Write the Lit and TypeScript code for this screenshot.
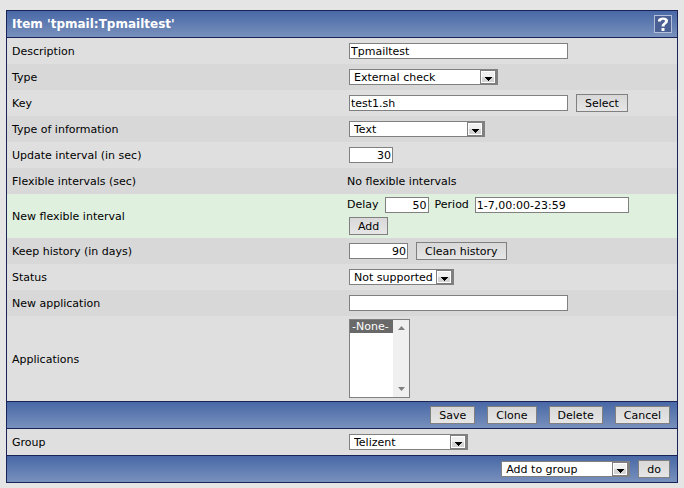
import { LitElement, html, css } from "lit";
import { customElement } from "lit/decorators.js";

const arrow = html`<svg class="arrow" width="17" height="14" viewBox="0 0 17 14" aria-hidden="true">
  <rect width="17" height="14" fill="#808080" />
  <rect x="1" y="1" width="14" height="12" fill="#fff" />
  <rect x="2" y="2" width="12" height="5" fill="#f0f0f0" />
  <rect x="2" y="7" width="12" height="5" fill="#d4d4d4" />
  <path d="M5 7h7v1h-1v1h-1v1h-1v1h-1v-1h-1v-1h-1v-1h-1z" fill="#000" />
</svg>`;

@customElement("form-row")
export class FormRow extends LitElement {
  static styles = css`
    :host {
      display: grid;
      grid-template-columns: 1fr 1fr;
      align-items: center;
      min-height: 26px;
    }
    .label {
      padding: 2px 5px 0;
    }
    .value {
      padding: 3px 5px;
      display: flex;
      flex-direction: column;
      gap: 4px;
      align-items: flex-start;
    }
  `;

  render() {
    return html`<div class="label"><slot name="label"></slot></div>
      <div class="value"><slot></slot></div>`;
  }
}

@customElement("app-root")
export class AppRoot extends LitElement {
  static styles = css`
    :host {
      display: block;
      box-sizing: border-box;
      min-height: 100vh;
      padding: 10px 6px 5px;
      background: #e5e5e5;
      color: #000;
      font: 11px/14px "DejaVu Sans", Verdana, sans-serif;
    }
    .panel {
      border: 1px solid #1a2358;
    }
    .bar {
      display: flex;
      align-items: center;
      justify-content: flex-end;
      gap: 12px;
      height: 26px;
      padding: 0 7px;
      background: linear-gradient(#4868a6, #7890bc);
    }
    .title {
      justify-content: space-between;
      padding: 0 5px;
      border-bottom: 1px solid #1a2358;
    }
    .actions {
      border-top: 1px solid #1a2358;
    }
    .group {
      border-top: 1px solid #1a2358;
    }
    .bulk {
      gap: 8px;
    }
    h1 {
      margin: 0;
      color: #fff;
      font-size: 12px;
      line-height: 16px;
    }
    .help {
      width: 18px;
      height: 18px;
    }
    .help svg {
      display: block;
    }
    form-row {
      background: #dfdfdf;
    }
    .alt {
      background: #d8d8d8;
    }
    .new {
      background: #dff0df;
    }
    .line {
      display: flex;
      align-items: center;
    }
    .control {
      margin-left: 2px;
    }
    .text {
      padding-top: 2px;
    }
    input,
    select,
    button {
      box-sizing: border-box;
      margin: 0;
      border: 1px solid #808080;
      border-radius: 0;
      color: #000;
      font: inherit;
    }
    input {
      height: 16px;
      padding: 0 1px;
      background: #fff;
    }
    button {
      height: 18px;
      padding: 2px 8px 0;
      line-height: 14px;
      white-space: nowrap;
      background: linear-gradient(#d8d8d8, #e6e6e6);
    }
    .num {
      width: 44px;
      text-align: right;
    }
    .days {
      width: 59px;
    }
    .wide {
      width: 219px;
    }
    .period {
      width: 154px;
    }
    .gap {
      margin-left: 8px;
    }
    .pair {
      display: flex;
      align-items: center;
      gap: 6px;
    }
    .drop {
      position: relative;
      display: flex;
      height: 16px;
    }
    .drop select {
      appearance: none;
      width: 100%;
      height: 16px;
      padding: 1px 18px 0 4px;
      line-height: 14px;
      background: #fff;
    }
    .arrow {
      position: absolute;
      top: 1px;
      right: 1px;
      pointer-events: none;
    }
    .w-type {
      width: 149px;
    }
    .w-info {
      width: 136px;
    }
    .w-status {
      width: 105px;
    }
    .w-group {
      width: 119px;
    }
    .w-bulk {
      width: 129px;
    }
    .list {
      display: flex;
      box-sizing: border-box;
      width: 61px;
      height: 79px;
      border: 1px solid #808080;
      background: #fff;
    }
    .list select {
      flex: 1;
      min-width: 0;
      height: 77px;
      padding: 0;
      border: 0;
      background: #fff;
      overflow: hidden;
      scrollbar-width: none;
    }
    .list option {
      min-height: 13px;
      padding: 0 2px;
      line-height: 13px;
    }
    .list option:checked {
      background: #696969 linear-gradient(#696969, #696969);
      color: #fff;
      -webkit-text-fill-color: #fff;
    }
    .track {
      width: 16px;
      display: flex;
      flex-direction: column;
      justify-content: space-between;
      background: #f0f0f0;
    }
  `;

  private drop(id: string, width: string, value: string, label: string) {
    return html`<span class="drop ${width}">
      <select id=${id} aria-label=${label}>
        <option>${value}</option>
      </select>
      ${arrow}
    </span>`;
  }

  render() {
    return html`
      <form class="panel" @submit=${(e: Event) => e.preventDefault()}>
        <header class="bar title">
          <h1>Item 'tpmail:Tpmailtest'</h1>
          <a class="help" href="#help" aria-label="Help">
            <svg width="18" height="18" viewBox="0 0 18 18" aria-hidden="true">
              <rect x="0.5" y="0.5" width="17" height="17" fill="#4a5f94" stroke="#b4c0da" />
              <path
                d="M4 6.5V5Q4.8 2.5 9 2.5Q14 2.5 14 6Q14 8 11.8 9.2Q10.5 10 10.5 11.5H7.5Q7.5 9 9.5 7.9Q11 7 11 6Q11 4.8 9 4.8Q7 4.8 6.8 6.5Z"
                fill="#fff"
              />
              <rect x="7.5" y="13" width="3" height="3" fill="#fff" />
            </svg>
          </a>
        </header>
        <form-row>
          <label slot="label" for="description">Description</label>
          <input id="description" class="wide control" value="Tpmailtest" />
        </form-row>
        <form-row class="alt">
          <label slot="label" for="type">Type</label>
          <div class="control">${this.drop("type", "w-type", "External check", "Type")}</div>
        </form-row>
        <form-row>
          <label slot="label" for="key">Key</label>
          <div class="line control">
            <input id="key" class="wide" value="test1.sh" />
            <button class="gap" type="button">Select</button>
          </div>
        </form-row>
        <form-row class="alt">
          <label slot="label" for="info">Type of information</label>
          <div class="control">${this.drop("info", "w-info", "Text", "Type of information")}</div>
        </form-row>
        <form-row>
          <label slot="label" for="update">Update interval (in sec)</label>
          <input id="update" class="num control" value="30" />
        </form-row>
        <form-row class="alt">
          <span slot="label">Flexible intervals (sec)</span>
          <span class="text">No flexible intervals</span>
        </form-row>
        <form-row class="new">
          <span slot="label">New flexible interval</span>
          <div class="pair">
            <label for="delay">Delay</label>
            <input id="delay" class="num" value="50" />
            <label for="period">Period</label>
            <input id="period" class="period" value="1-7,00:00-23:59" />
          </div>
          <button class="control" type="button">Add</button>
        </form-row>
        <form-row class="alt">
          <label slot="label" for="history">Keep history (in days)</label>
          <div class="line control">
            <input id="history" class="num days" value="90" />
            <button class="gap" type="button">Clean history</button>
          </div>
        </form-row>
        <form-row>
          <label slot="label" for="status">Status</label>
          <div class="control">${this.drop("status", "w-status", "Not supported", "Status")}</div>
        </form-row>
        <form-row class="alt">
          <label slot="label" for="newapp">New application</label>
          <input id="newapp" class="wide control" />
        </form-row>
        <form-row>
          <label slot="label" for="apps">Applications</label>
          <div class="list control">
            <select id="apps" multiple size="5">
              <option selected>-None-</option>
            </select>
            <div class="track" aria-hidden="true">
              <svg width="16" height="16" viewBox="0 0 16 16"><path d="M5 10L8.5 6L12 10z" fill="#808080" /></svg>
              <svg width="16" height="16" viewBox="0 0 16 16"><path d="M5 6L8.5 10L12 6z" fill="#808080" /></svg>
            </div>
          </div>
        </form-row>
        <div class="bar actions">
          <button type="submit">Save</button>
          <button type="button">Clone</button>
          <button type="button">Delete</button>
          <button type="button">Cancel</button>
        </div>
        <form-row class="group">
          <label slot="label" for="group">Group</label>
          <div class="control">${this.drop("group", "w-group", "Telizent", "Group")}</div>
        </form-row>
        <div class="bar actions bulk">
          ${this.drop("bulk", "w-bulk", "Add to group", "Group action")}
          <button type="button">do</button>
        </div>
      </form>
    `;
  }
}
